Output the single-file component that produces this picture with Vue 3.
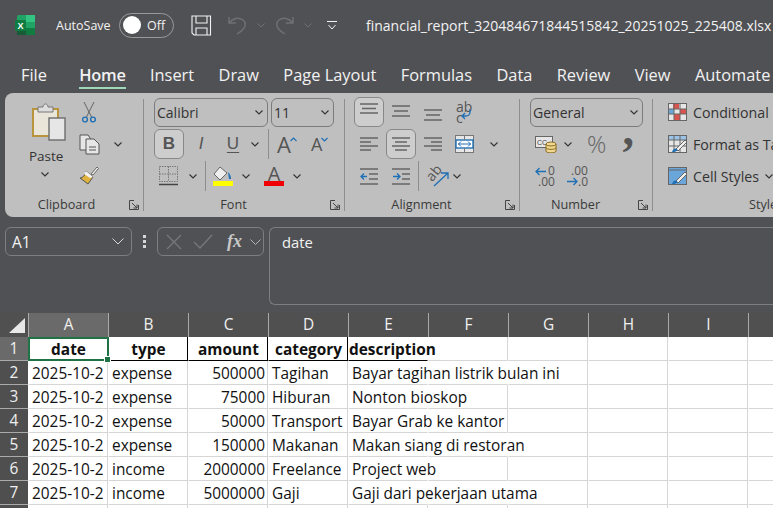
<template>
  <div class="app">
    <!-- title bar -->
    <div class="titlebar">
      <svg class="logo" width="21" height="21" viewBox="0 0 21 21">
        <rect x="2" y="0" width="18" height="20" rx="1.5" fill="#21a366" />
        <rect x="11" y="0" width="9" height="7" fill="#33c481" />
        <rect x="11" y="13" width="9" height="7" fill="#107c41" />
        <rect x="2" y="13" width="9" height="7" fill="#185c37" />
        <rect x="0" y="5" width="11" height="11" rx="1" fill="#107c41" />
        <text x="5.5" y="14" text-anchor="middle" class="logo-x">X</text>
      </svg>
      <span class="autosave">AutoSave</span>
      <div class="toggle"><span class="knob"></span><span class="off">Off</span></div>
      <svg class="qat save" width="21" height="21" viewBox="0 0 21 21" fill="none" stroke="#f2f2f2" stroke-width="1.1">
        <path d="M1 1h18.5v19H3l-2-2z" />
        <path d="M5 1v7h11V1M5 20v-7h11v7" />
      </svg>
      <svg class="qat undo" width="19" height="20" viewBox="0 0 19 20" fill="none" stroke="#6f7074" stroke-width="1.4">
        <path d="M1 2v6h7M1 8c4-5 10-6 14-3s3 9-6 14" />
      </svg>
      <svg class="chev-dim" width="8" height="5" viewBox="0 0 8 5" fill="none" stroke="#6f7074"><path d="M.5.5 4 4 7.5.5" /></svg>
      <svg class="qat redo" width="19" height="20" viewBox="0 0 19 20" fill="none" stroke="#6f7074" stroke-width="1.4">
        <path d="M18 2v6h-7M18 8C14 3 8 2 4 5s-3 9 6 14" />
      </svg>
      <svg class="chev-dim" width="8" height="5" viewBox="0 0 8 5" fill="none" stroke="#6f7074"><path d="M.5.5 4 4 7.5.5" /></svg>
      <svg class="custom" width="10" height="9" viewBox="0 0 10 9" fill="none" stroke="#f2f2f2"><path d="M0 .5h10M1.5 4 5 8l3.5-4" /></svg>
      <span class="filename">financial_report_320484671844515842_20251025_225408.xlsx</span>
    </div>

    <!-- tabs -->
    <div class="tabs">
      <span v-for="t in tabs" :key="t" class="tab" :class="{ active: t === 'Home' }">{{ t }}</span>
    </div>

    <!-- ribbon -->
    <div class="ribbon">
      <section class="group clip">
        <div class="group-body clip-body">
          <div class="paste">
            <svg width="35" height="38" viewBox="0 0 35 38">
              <rect x="1" y="6" width="25" height="27" fill="#e9e5d8" stroke="#b8953c" stroke-width="2" />
              <path d="M6 9V4h5c0-4 5-4 5 0h5v5z" fill="#ddd" stroke="#777" />
              <rect x="17" y="15" width="16" height="22" fill="#e6e6e6" stroke="#6d6d6d" stroke-width="1.4" />
            </svg>
            <span class="paste-label">Paste</span>
            <svg class="chev" width="8" height="5" viewBox="0 0 8 5"><path d="M.5.5 4 4 7.5.5" /></svg>
          </div>
          <div class="clip-tools">
            <svg class="scissors" width="14" height="21" viewBox="0 0 14 21" fill="none" stroke="#666">
              <path d="M2 0l7.500 15M12 0 4.500 15" />
              <circle cx="3" cy="17.500" r="2.400" stroke="#1f6fb5" stroke-width="1.400" />
              <circle cx="11" cy="17.500" r="2.400" stroke="#1f6fb5" stroke-width="1.400" />
            </svg>
            <div class="copy-row">
              <svg width="21" height="21" viewBox="0 0 21 21" fill="#e6e6e6" stroke="#555">
                <path d="M1 1h8l2 3v12H1z" />
                <path d="M7 5h8l5 5v10H7z" />
                <path d="M10 13h7M10 16h7" />
              </svg>
              <svg class="chev" width="8" height="5" viewBox="0 0 8 5"><path d="M.5.5 4 4 7.5.5" /></svg>
            </div>
            <svg width="20" height="19" viewBox="0 0 20 19">
              <path d="M12 8 18 1l1.500 1.500L14 9z" fill="#eee" stroke="#666" />
              <path d="M7 5l7 6-5 7-8-6c3 0 5-3 6-7z" fill="#e0b13c" stroke="#555" />
              <path d="M7 5l7 6-3 1-6-4z" fill="#f2f2f2" />
            </svg>
          </div>
        </div>
        <div class="group-foot">Clipboard<svg class="launch" width="10" height="10" viewBox="0 0 10 10" fill="none" stroke="#444"><path d="M9.500 5v4.500H.5V.5H5M3 3l5 5M8 4.500V8H4.500" /></svg></div>
      </section>

      <section class="group font">
        <div class="group-body rows">
          <div class="row">
            <div class="combo name">Calibri<svg class="chev" width="8" height="5" viewBox="0 0 8 5"><path d="M.5.5 4 4 7.5.5" /></svg></div>
            <div class="combo size">11<svg class="chev" width="8" height="5" viewBox="0 0 8 5"><path d="M.5.5 4 4 7.5.5" /></svg></div>
          </div>
          <div class="row">
            <div class="btn on glyph bold">B</div>
            <div class="btn glyph italic">I</div>
            <div class="btn glyph under">U</div>
            <svg class="chev under-chev" width="8" height="5" viewBox="0 0 8 5"><path d="M.5.5 4 4 7.5.5" /></svg>
            <i class="vsep"></i>
            <div class="btn w36 glyph grow">A<svg class="mark" width="7" height="5" viewBox="0 0 7 5" fill="none" stroke="#1f6fb5" stroke-width="1.200"><path d="M.5 4 3.500 1l3 3" /></svg></div>
            <div class="btn w36 glyph shrink">A<svg class="mark" width="7" height="5" viewBox="0 0 7 5" fill="none" stroke="#1f6fb5" stroke-width="1.200"><path d="M.5 1l3 3 3-3" /></svg></div>
          </div>
          <div class="row">
            <svg class="borders" width="20" height="20" viewBox="0 0 20 20" fill="none" stroke="#777" stroke-dasharray="1.500 1">
              <path d="M.5.5h18v15H.5zM9.500.5v15M.5 8h18" />
              <path d="M0 18.500h19" stroke="#444" stroke-width="1.600" stroke-dasharray="none" />
            </svg>
            <svg class="chev border-chev" width="8" height="5" viewBox="0 0 8 5"><path d="M.5.5 4 4 7.5.5" /></svg>
            <i class="vsep"></i>
            <div class="swatch-btn">
              <svg width="20" height="15" viewBox="0 0 20 15">
                <path d="M7 1 1 8l6 6 7-7z" fill="#eee" stroke="#666" />
                <path d="M15 6c2 2 3 4 3 7h-2z" fill="#1f6fb5" />
              </svg>
              <span class="swatch yellow"></span>
            </div>
            <svg class="chev fill-chev" width="8" height="5" viewBox="0 0 8 5"><path d="M.5.5 4 4 7.5.5" /></svg>
            <div class="swatch-btn color">
              <span class="color-a">A</span>
              <span class="swatch red"></span>
            </div>
            <svg class="chev fill-chev" width="8" height="5" viewBox="0 0 8 5"><path d="M.5.5 4 4 7.5.5" /></svg>
          </div>
        </div>
        <div class="group-foot">Font<svg class="launch" width="10" height="10" viewBox="0 0 10 10" fill="none" stroke="#444"><path d="M9.500 5v4.500H.5V.5H5M3 3l5 5M8 4.500V8H4.500" /></svg></div>
      </section>

      <section class="group align">
        <div class="group-body rows">
          <div class="row tight">
            <div v-for="(a, i) in vAligns" :key="i" class="btn" :class="{ on: i === 0 }">
              <svg width="18" height="20" viewBox="0 0 18 20" fill="none" stroke="#666" stroke-width="1.300"><path :d="a" /></svg>
            </div>
            <div class="btn">
              <span class="wrap"><b>ab</b><b>c</b></span>
              <svg class="wrap-arrow" width="11" height="11" viewBox="0 0 11 11" fill="none" stroke="#1f6fb5" stroke-width="1.300"><path d="M9 0v3c0 3-2 4-4 4H1M4 4 1 7l3 3" /></svg>
            </div>
          </div>
          <div class="row tight">
            <div v-for="(a, i) in hAligns" :key="i" class="btn" :class="{ on: i === 1 }">
              <svg width="18" height="18" viewBox="0 0 18 18" fill="none" stroke="#666" stroke-width="1.300"><path :d="a" /></svg>
            </div>
            <div class="btn">
              <svg width="20" height="19" viewBox="0 0 20 19" fill="none">
                <rect x=".5" y=".5" width="18" height="17" fill="#e6e6e6" stroke="#777" />
                <rect x="1" y="5" width="17" height="8" fill="#fff" stroke="#1f6fb5" stroke-width="1.400" />
                <path d="M3 9h13M6 6.500 3.500 9 6 11.500M13 6.500 15.500 9 13 11.500" stroke="#1f6fb5" />
                <path d="M9.500 1v4M9.500 13v4" stroke="#777" />
              </svg>
            </div>
            <svg class="chev merge-chev" width="8" height="5" viewBox="0 0 8 5"><path d="M.5.5 4 4 7.5.5" /></svg>
          </div>
          <div class="row tight">
            <div class="btn">
              <svg width="19" height="17" viewBox="0 0 19 17" fill="none" stroke="#666" stroke-width="1.300">
                <path d="M0 1h18M9 6h9M9 11h9M0 16h18" />
                <path d="M7 8.500H1M4 5.500l-3 3 3 3" stroke="#1f6fb5" />
              </svg>
            </div>
            <div class="btn">
              <svg width="19" height="17" viewBox="0 0 19 17" fill="none" stroke="#666" stroke-width="1.300">
                <path d="M0 1h18M10 6h8M10 11h8M0 16h18" />
                <path d="M1 8.500h7M5 5.500l3 3-3 3" stroke="#1f6fb5" />
              </svg>
            </div>
            <i class="vsep"></i>
            <div class="btn angle">
              <span class="ab">ab</span>
              <svg width="16" height="15" viewBox="0 0 16 15" fill="none" stroke="#1f6fb5" stroke-width="1.300"><path d="M1 14 15 1M8 1h7v6" /></svg>
            </div>
            <svg class="chev" width="8" height="5" viewBox="0 0 8 5"><path d="M.5.5 4 4 7.5.5" /></svg>
          </div>
        </div>
        <div class="group-foot">Alignment<svg class="launch" width="10" height="10" viewBox="0 0 10 10" fill="none" stroke="#444"><path d="M9.500 5v4.500H.5V.5H5M3 3l5 5M8 4.500V8H4.500" /></svg></div>
      </section>

      <section class="group number">
        <div class="group-body rows">
          <div class="row">
            <div class="combo general">General<svg class="chev" width="8" height="5" viewBox="0 0 8 5"><path d="M.5.5 4 4 7.5.5" /></svg></div>
          </div>
          <div class="row num-row">
            <svg class="cur-icon" width="22" height="18" viewBox="0 0 22 18">
              <rect x=".5" y="1.500" width="17" height="11" fill="#e6e6e6" stroke="#666" />
              <text x="2" y="10" class="cur">CC</text>
              <path d="M11 9v7c0 2.500 10 2.500 10 0V9M11 12.500c0 2.500 10 2.500 10 0" fill="#f0d890" stroke="#8a6a1e" />
              <ellipse cx="16" cy="9" rx="5" ry="2" fill="#f0d890" stroke="#8a6a1e" />
            </svg>
            <svg class="chev" width="8" height="5" viewBox="0 0 8 5"><path d="M.5.5 4 4 7.5.5" /></svg>
            <span class="pct">%</span>
            <span class="comma">,</span>
          </div>
          <div class="row num-row dec">
            <div class="dec-btn">
              <svg width="11" height="9" viewBox="0 0 11 9" fill="none" stroke="#1f6fb5" stroke-width="1.300"><path d="M11 4.500H1M4.500 1 1 4.500 4.500 8" /></svg>
              <span class="d1">0</span><span class="d2">.00</span>
            </div>
            <div class="dec-btn">
              <span class="d3">.00</span>
              <svg class="d-arrow" width="11" height="9" viewBox="0 0 11 9" fill="none" stroke="#1f6fb5" stroke-width="1.300"><path d="M0 4.500h10M6.500 1 10 4.500 6.500 8" /></svg>
              <span class="d4">.0</span>
            </div>
          </div>
        </div>
        <div class="group-foot">Number<svg class="launch" width="10" height="10" viewBox="0 0 10 10" fill="none" stroke="#444"><path d="M9.500 5v4.500H.5V.5H5M3 3l5 5M8 4.500V8H4.500" /></svg></div>
      </section>

      <section class="group styles">
        <div class="group-body rows">
          <div class="style-row">
            <svg width="19" height="18" viewBox="0 0 19 18">
              <rect x=".5" y=".5" width="18" height="17" fill="#e6e6e6" stroke="#666" />
              <rect x="5" y="1" width="6" height="5" fill="#d9534f" />
              <rect x="1" y="6" width="5" height="5" fill="#6aa6da" />
              <rect x="6" y="11" width="6" height="6" fill="#d9534f" />
              <rect x="12" y="6" width="6" height="5" fill="#d9534f" />
              <path d="M6 1v16M12 1v16M1 6h17M1 11h17" stroke="#666" fill="none" />
            </svg>
            <span>Conditional Formatting</span>
          </div>
          <div class="style-row">
            <svg width="19" height="18" viewBox="0 0 19 18">
              <rect x=".5" y=".5" width="18" height="17" fill="#e6e6e6" stroke="#666" />
              <rect x="1" y="1" width="17" height="4" fill="#9cc3e6" />
              <path d="M6 1v16M12 1v16M1 5h17M1 11h17" stroke="#666" fill="none" />
              <path d="M8 14 17 5l2 2-9 9z" fill="#eee" stroke="#666" />
              <path d="M4 17c1-4 4-4 5-3s0 3-5 3z" fill="#1f6fb5" />
            </svg>
            <span>Format as Table</span>
          </div>
          <div class="style-row">
            <svg width="19" height="18" viewBox="0 0 19 18">
              <rect x=".5" y=".5" width="18" height="17" fill="#6aa6da" stroke="#666" />
              <path d="M1 3h17" stroke="#666" />
              <path d="M8 14 17 5l2 2-9 9z" fill="#eee" stroke="#666" />
              <path d="M4 17c1-4 4-4 5-3s0 3-5 3z" fill="#1f6fb5" />
            </svg>
            <span>Cell Styles</span>
            <svg class="chev" width="8" height="5" viewBox="0 0 8 5"><path d="M.5.5 4 4 7.5.5" /></svg>
          </div>
        </div>
        <div class="group-foot">Styles</div>
      </section>
    </div>

    <!-- formula bar -->
    <div class="formula">
      <div class="namebox">A1<svg width="12" height="7" viewBox="0 0 12 7" fill="none" stroke="#d6d6d6"><path d="M.5.5 6 6 11.500.5" /></svg></div>
      <div class="dots"><i></i><i></i><i></i></div>
      <div class="fxbox">
        <svg width="16" height="16" viewBox="0 0 16 16" fill="none" stroke="#77787b" stroke-width="1.300"><path d="M1 1l14 14M15 1 1 15" /></svg>
        <svg width="20" height="15" viewBox="0 0 20 15" fill="none" stroke="#77787b" stroke-width="1.300"><path d="M1 8l6 6L19 1" /></svg>
        <span class="fx">fx</span>
        <svg width="11" height="6" viewBox="0 0 11 6" fill="none" stroke="#b5b5b5"><path d="M.5.5l5 5 5-5" /></svg>
      </div>
      <div class="input">date</div>
    </div>

    <!-- sheet -->
    <div class="sheet">
      <div class="head">
        <div class="corner"><span class="tri"></span></div>
        <div v-for="c in cols" :key="c" class="col" :class="{ sel: c === 'A' }">{{ c }}</div>
      </div>
      <div v-for="(r, i) in rows" :key="i" class="line" :class="{ first: i === 0 }">
        <div class="num" :class="{ sel: i === 0 }">{{ i + 1 }}</div>
        <div
          v-for="(c, j) in 10"
          :key="j"
          class="cell"
          :class="[aligns[j], { open: j >= 4 && j < 4 + r.open, hd: i === 0 && j < 5 }]"
        >{{ r.cells[j] }}</div>
      </div>
      <div class="picker"><span class="handle"></span></div>
    </div>
  </div>
</template>

<script setup>
const tabs = ['File', 'Home', 'Insert', 'Draw', 'Page Layout', 'Formulas', 'Data', 'Review', 'View', 'Automate']
const cols = ['A', 'B', 'C', 'D', 'E', 'F', 'G', 'H', 'I', '']
const aligns = ['', '', 'right', '', 'desc']

const vAligns = ['M0 2h18M2 6.500h14M0 11h18', 'M0 4h18M2 9h14M0 14h18', 'M0 8h18M2 13h14M0 18h18']
const hAligns = ['M0 3h18M0 7h11M0 11h18M0 15h11', 'M0 3h18M3 7h12M0 11h18M3 15h12', 'M0 3h18M7 7h11M0 11h18M7 15h11']

// open = how many columns from E have no right border because the text runs over
const rows = [
  { cells: ['date', 'type', 'amount', 'category', 'description'], open: 1 },
  { cells: ['2025-10-2', 'expense', '500000', 'Tagihan', 'Bayar tagihan listrik bulan ini'], open: 2 },
  { cells: ['2025-10-2', 'expense', '75000', 'Hiburan', 'Nonton bioskop'], open: 1 },
  { cells: ['2025-10-2', 'expense', '50000', 'Transport', 'Bayar Grab ke kantor'], open: 1 },
  { cells: ['2025-10-2', 'expense', '150000', 'Makanan', 'Makan siang di restoran'], open: 2 },
  { cells: ['2025-10-2', 'income', '2000000', 'Freelance', 'Project web'], open: 1 },
  { cells: ['2025-10-2', 'income', '5000000', 'Gaji', 'Gaji dari pekerjaan utama'], open: 2 },
  { cells: [], open: 0 },
]
</script>

<style>
html, body { margin: 0; background: #505155; overflow: hidden; }
</style>

<style scoped>
.app {
  width: 773px;
  height: 508px;
  overflow: hidden;
  background: #505155;
  font-family: "Open Sans", "Noto Sans", sans-serif;
  color: #f2f2f2;
}

.titlebar {
  height: 50px;
  display: flex;
  align-items: center;
  padding-left: 15px;
  white-space: nowrap;
}
.logo { margin-right: 20px; }
.logo-x { font: bold 9px "Liberation Sans", sans-serif; fill: #fff; }
.autosave { font-size: 12.5px; width: 63px; }
.toggle {
  width: 50px;
  height: 23px;
  border: 1px solid #9a9a9a;
  border-radius: 13px;
  display: flex;
  align-items: center;
  padding-left: 3px;
  box-sizing: content-box;
  margin-right: 17px;
}
.knob { width: 18px; height: 18px; border-radius: 50%; background: #fff; }
.off { font-size: 12.5px; margin-left: 6px; }
.undo { margin-left: 16px; margin-right: 10px; }
.redo { margin-left: 10px; margin-right: 10px; }
.chev-dim { margin-top: 1px; }
.custom { margin-left: 15px; margin-right: 29px; }
.filename { font-size: 14px; }

.tabs {
  height: 43px;
  display: flex;
  align-items: flex-start;
  padding-left: 21px;
  gap: 24.4px;
  white-space: nowrap;
  font-size: 16.4px;
  line-height: 21px;
  padding-top: 14px;
  box-sizing: border-box;
}
.tab { position: relative; flex: none; }
.tab:first-child { margin-right: 8px; }
.tab.active { font-weight: 600; letter-spacing: -0.3px; }
.tab.active::after {
  content: "";
  position: absolute;
  left: 0;
  right: 0;
  top: 23px;
  height: 2px;
  background: #9fd8b9;
}

.ribbon {
  height: 124px;
  margin-left: 5px;
  background: #bfbfbf;
  border-radius: 8px 0 0 8px;
  display: flex;
  color: #333;
  overflow: hidden;
  white-space: nowrap;
}
.group {
  flex: none;
  position: relative;
  display: flex;
  flex-direction: column;
  padding: 4px 0 0;
  box-sizing: border-box;
}
.group::after {
  content: "";
  position: absolute;
  right: 0;
  top: 6px;
  bottom: 6px;
  width: 1px;
  background: #8e8e8e;
}
.group-body { height: 96px; }
.group-foot {
  position: relative;
  text-align: center;
  font-size: 12.7px;
  line-height: 18px;
  margin-top: 2px;
  padding-right: 22px;
  color: #3a3a3a;
}
.launch { position: absolute; right: 5px; top: 5px; }
.clip { width: 139px; }
.clip .group-foot { padding-right: 16px; }
.font { width: 201px; padding-left: 10px; }
.align { width: 175px; padding-left: 9px; }
.number { width: 133px; padding-left: 10px; }
.styles { width: 120px; padding-left: 15px; }
.styles::after { display: none; }
.font .group-foot { margin-left: -10px; }
.align .group-foot { margin-left: -9px; }
.number .group-foot { margin-left: -10px; }
.styles .group-foot { margin-left: 81px; padding: 0; text-align: left; }

.chev { fill: none; stroke: #333; stroke-width: 1.100; flex: none; }

.clip-body { display: flex; }
.paste {
  width: 60px;
  margin-left: 22px;
  display: flex;
  flex-direction: column;
  align-items: flex-start;
}
.paste svg:first-child { margin: 6px 0 0 5px; flex: none; }
.paste-label { font-size: 13.5px; line-height: 18px; margin: 6px 0 0 2px; }
.paste .chev { margin: 7px 0 0 14px; }
.clip-tools {
  display: flex;
  flex-direction: column;
  align-items: flex-start;
  gap: 11px;
  margin-left: -8px;
  padding-top: 5px;
}
.scissors { margin-left: 3px; }
.copy-row { display: flex; align-items: center; gap: 14px; }

.rows { display: flex; flex-direction: column; gap: 2px; }
.row { display: flex; align-items: center; height: 30px; gap: 2px; }
.tight { gap: 2px; }
.combo {
  height: 29px;
  box-sizing: border-box;
  border: 1px solid #7c7c7c;
  border-radius: 6px;
  display: flex;
  align-items: center;
  justify-content: space-between;
  padding: 0 4px 0 2px;
  font-size: 14px;
}
.combo.name { width: 114px; margin-right: 1px; }
.combo.size { width: 63px; }
.combo.general { width: 113px; }

.btn {
  width: 30px;
  height: 30px;
  flex: none;
  box-sizing: border-box;
  border: 1px solid transparent;
  border-radius: 6px;
  display: flex;
  align-items: center;
  justify-content: center;
  position: relative;
}
.btn.on { background: #cdcdcd; border-color: #888; }
.w36 { width: 36px; }
.glyph { font-family: "Liberation Serif", serif; font-size: 17px; color: #555; }
.bold { font-family: "Liberation Sans", sans-serif; font-weight: 700; }
.italic { font-style: italic; font-family: "Liberation Sans", sans-serif; }
.under { text-decoration: underline; font-family: "Liberation Sans", sans-serif; text-underline-offset: 3px; }
.grow { font: 22px "Open Sans", sans-serif; justify-content: flex-start; padding-left: 5px; }
.shrink { font: 18px "Open Sans", sans-serif; justify-content: flex-start; padding-left: 1px; }
.mark { margin-left: -1px; margin-bottom: 9px; }
.under-chev { margin: 0 7px 0 1px; }
.border-chev { margin: 0 6px 0 8px; }
.vsep { width: 1px; height: 30px; background: #8e8e8e; flex: none; }
.borders { margin-left: 5px; flex: none; }
.swatch-btn {
  width: 20px;
  display: flex;
  flex-direction: column;
  align-items: center;
  margin-left: 5px;
}
.swatch { width: 20px; height: 5px; display: block; }
.yellow { background: #ffff00; }
.red { background: #f00000; }
.color-a { font-size: 20px; line-height: 15px; color: #555; }
.fill-chev { margin: 0 6px 0 7px; }
.color { margin-left: 6px; }

.wrap { display: flex; flex-direction: column; font-size: 14px; line-height: 11px; color: #555; align-items: flex-start; margin-left: -1px; margin-right: 1px; width: 16px; }
.wrap b { font-weight: 400; }
.wrap-arrow { position: absolute; right: 7px; top: 11px; }
.merge-chev { margin-left: 8px; }
.angle { margin-left: 0; }
.ab { position: absolute; left: 3px; top: 1px; font-size: 14px; color: #555; transform: rotate(-50deg); }
.angle svg { margin: 7px 0 0 10px; }

.num-row { gap: 7px; padding-left: 5px; }
.cur-icon { flex: none; }
.pct { font-size: 24px; color: #666; margin-left: 8px; line-height: 30px; font-weight: 300; }
.comma { font: 700 46px/30px "Liberation Serif", serif; color: #555; margin-left: 9px; transform: translateY(-14px); }
.cur { font: 7px "Liberation Sans", sans-serif; fill: #444; }
.dec { gap: 16px; padding-left: 5px; }
.dec-btn { position: relative; width: 20px; height: 20px; font-size: 12px; line-height: 10px; color: #555; }
.dec-btn svg { position: absolute; left: 0; top: 1px; }
.d1 { position: absolute; left: 13px; top: 0; }
.d2 { position: absolute; left: 3px; top: 11px; }
.d3 { position: absolute; left: 0; top: 0; }
.dec-btn .d-arrow { top: 11px; left: -4px; }
.d4 { position: absolute; left: 7px; top: 11px; }

.style-row {
  display: flex;
  align-items: center;
  gap: 6px;
  height: 30px;
  font-size: 14.2px;
  color: #333;
}
.style-row svg { flex: none; }

.formula {
  height: 78px;
  margin-top: 10px;
  display: flex;
  align-items: flex-start;
  padding-left: 5px;
  font-size: 14.8px;
}
.namebox, .fxbox, .input {
  box-sizing: border-box;
  border: 1px solid #7d7e82;
  border-radius: 6px;
}
.namebox {
  width: 127px;
  height: 29px;
  display: flex;
  align-items: center;
  justify-content: space-between;
  padding: 0 7px 0 6px;
  font-size: 15.5px;
}
.dots {
  width: 25px;
  height: 29px;
  display: flex;
  flex-direction: column;
  align-items: center;
  justify-content: center;
  gap: 2px;
}
.dots i { width: 3px; height: 3px; background: #d6d6d6; }
.fxbox {
  width: 107px;
  height: 29px;
  display: flex;
  align-items: center;
  padding-left: 8px;
  gap: 11px;
}
.fx {
  font: italic 700 18px "Liberation Serif", serif;
  color: #c7c7c7;
  width: 21px;
  margin-left: 3px;
  margin-right: -9px;
}
.input {
  flex: 1;
  height: 78px;
  margin-left: 5px;
  padding: 3px 12px;
  border-right: none;
  border-radius: 6px 0 0 6px;
  line-height: 22px;
}

.sheet { position: relative; margin-top: 8px; font-size: 15.4px; }
.head { display: flex; height: 24px; background: #505050; }
.corner { width: 28px; position: relative; flex: none; }
.tri {
  position: absolute;
  left: 9px;
  bottom: 4px;
  border-style: solid;
  border-width: 0 0 15px 16px;
  border-color: transparent transparent #e8e8e8 transparent;
}
.col {
  width: 80px;
  flex: none;
  box-sizing: border-box;
  border-left: 1px solid #aaa;
  text-align: center;
  line-height: 24px;
  color: #f0f0f0;
}
.col.sel { background: #6a6a6a; }
.line { display: flex; height: 24px; background: #fff; }
.num {
  width: 28px;
  flex: none;
  box-sizing: border-box;
  background: #4f4f4f;
  border-bottom: 1px solid #aaa;
  text-align: center;
  color: #f0f0f0;
  line-height: 24px;
}
.num.sel { background: #6a6a6a; }
.cell {
  width: 80px;
  flex: none;
  box-sizing: border-box;
  color: #111;
  border-left: 1px solid transparent;
  border-right: 1px solid #d6d6d6;
  border-bottom: 1px solid #d6d6d6;
  padding: 0 2px 0 3px;
  line-height: 25px;
  white-space: nowrap;
  overflow: visible;
}
.cell.right { text-align: right; }
.cell.open { border-right-color: transparent; }
.first .cell.hd {
  font-weight: 700;
  text-align: center;
  border-bottom-color: #000;
  border-right-color: #000;
}
.first .cell.hd.desc { text-align: left; padding-left: 0; border-right-color: transparent; }
.picker {
  position: absolute;
  left: 28px;
  top: 24px;
  width: 81px;
  height: 24px;
  box-sizing: border-box;
  border: 2px solid #1f7246;
  pointer-events: none;
}
.handle {
  position: absolute;
  right: -4px;
  bottom: -4px;
  width: 5px;
  height: 5px;
  background: #1f7246;
  border: 1px solid #fff;
}
</style>
